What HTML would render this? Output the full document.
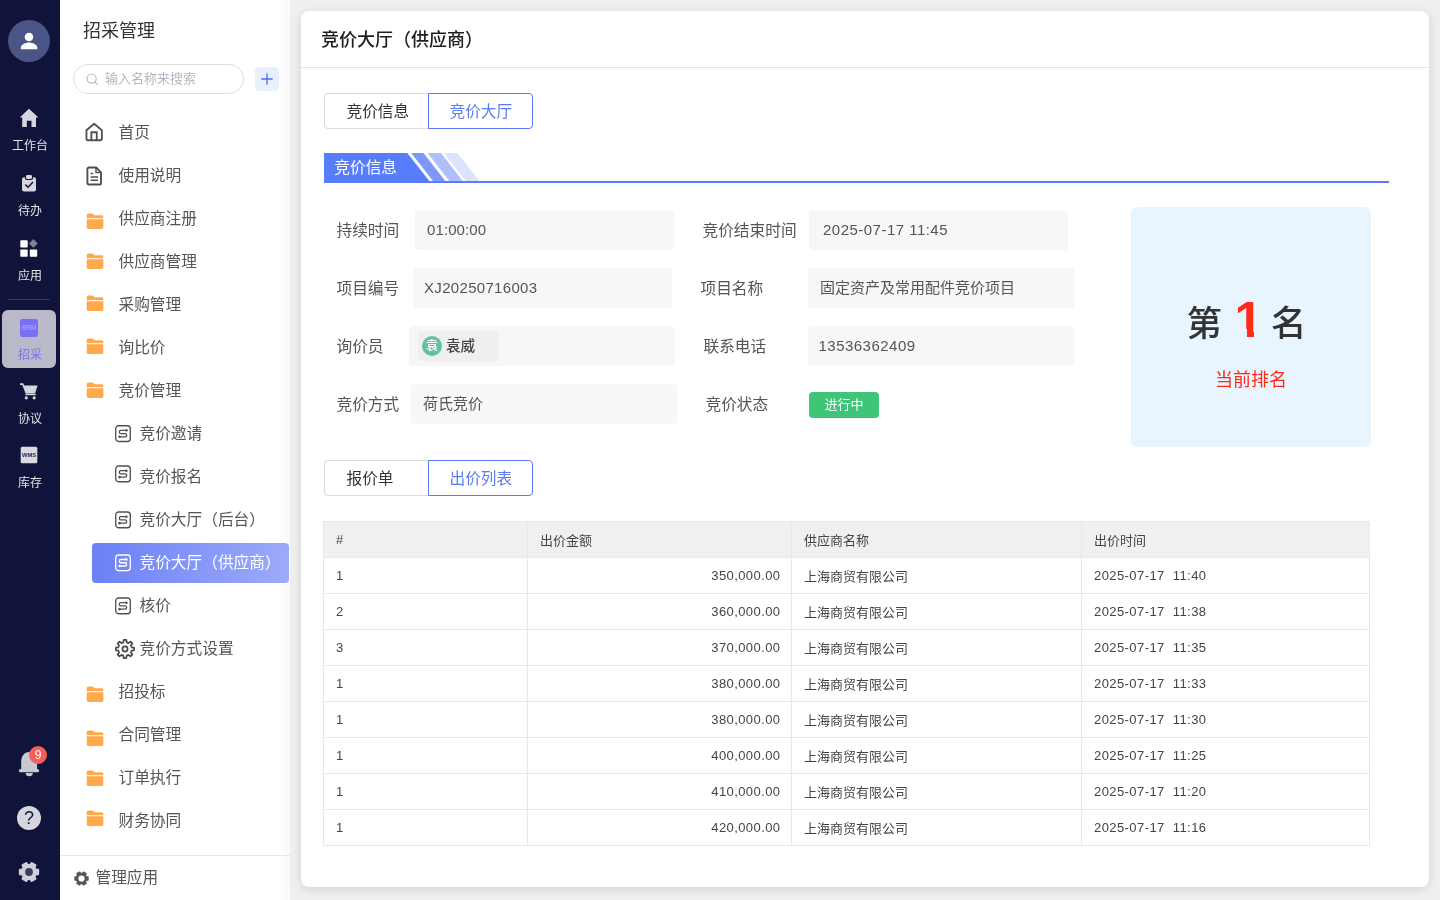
<!DOCTYPE html>
<html lang="zh-CN">
<head>
<meta charset="utf-8">
<title>竞价大厅（供应商）</title>
<style>
*{box-sizing:border-box;margin:0;padding:0}
html,body{width:1440px;height:900px;overflow:hidden}
body{will-change:transform;font-family:"Liberation Sans","Noto Sans CJK SC",sans-serif;background:#efefef;color:#333;position:relative}
.abs{position:absolute}
/* rail */
#rail{position:absolute;left:0;top:0;width:60px;height:900px;background:#11143a}
#rail .av{position:absolute;left:8px;top:20px;width:42px;height:42px;border-radius:50%;background:#4a5487}
#rail .it{position:absolute;left:0;width:60px;text-align:center;color:#dcdce2;font-size:12px;line-height:12px}
#rail .lbl{position:absolute;left:0;width:60px;text-align:center;color:#e3e3e8;font-size:12px;line-height:14px}
#rail svg{position:absolute}
#rail .div{position:absolute;left:8px;top:299px;width:42px;height:1px;background:#34385a}
#rail .act{position:absolute;left:2px;top:310px;width:54px;height:58px;border-radius:6px;background:#b9b9c9}
/* sidebar */
#side{position:absolute;left:60px;top:0;width:230px;height:900px;background:linear-gradient(90deg,#fff 0,#fff 216px,#fafafa 230px)}
#side h1{position:absolute;left:23px;top:18.500px;font-size:18px;line-height:24px;font-weight:400;color:#333}
#side .search{position:absolute;left:13px;top:64px;width:171px;height:30px;border:1px solid #dcdcdc;border-radius:15px}
#side .search span{position:absolute;left:31px;top:5.500px;font-size:13px;line-height:16px;color:#b4b8c0}
#side .plus{position:absolute;left:195px;top:67px;width:24px;height:24px;border-radius:4px;background:#e8f0fe}
#side .mi{position:absolute;left:58.500px;font-size:15.700px;line-height:22px;color:#555;white-space:nowrap}
#side .si{position:absolute;left:79.500px;font-size:15.700px;line-height:22px;color:#555;white-space:nowrap}
#side svg{position:absolute}
#side .active{position:absolute;left:32px;top:543px;width:197px;height:40px;border-radius:4px;background:linear-gradient(100deg,#6a80f5,#9dabf9)}
#side .foot{position:absolute;left:0;top:855px;width:230px;height:45px;border-top:1px solid #e8e8ec}
#side .foot span{position:absolute;left:35.500px;top:10.500px;font-size:15.700px;line-height:22px;color:#555}
/* main */
#card{position:absolute;left:301px;top:11px;width:1128px;height:876px;background:#fff;border-radius:8px;box-shadow:0 2px 10px rgba(0,0,0,.12)}
#card .title{position:absolute;left:20px;top:16px;font-size:18px;line-height:26px;font-weight:500;color:#1f1f1f}
#card .hr{position:absolute;left:0;top:56px;width:1128px;height:1px;background:#e4e4e4}
.tabs{position:absolute;height:36px}
.tabs div{position:absolute;top:0;height:36px;border:1px solid #d9d9d9;font-size:15.700px;line-height:36px;text-align:left;padding-left:21.500px;color:#333;background:#fff}
.tabs .l{left:0;border-radius:4px 0 0 4px}
.tabs .r{padding-left:20.500px;border-color:#5b7cf2;color:#5b7cf2;border-radius:0 4px 4px 0}
.lab{position:absolute;font-size:15.700px;line-height:22px;color:#555;white-space:nowrap}
.inp{position:absolute;height:40px;border-radius:4px;background:#f7f7f7;font-size:15px;line-height:40px;color:#555;white-space:nowrap}
table{position:absolute;left:323px;top:521px;border-collapse:collapse;font-size:13px;color:#444;table-layout:fixed}
td,th{border:1px solid #e8e8e8;height:36px;padding:0 11px 0 12px;text-align:left;font-weight:400;white-space:nowrap}
th{background:#f0f0f0}
td.n{text-align:right;letter-spacing:.42px;padding-right:10.500px}
td.d{letter-spacing:.42px}
.chip{position:absolute;left:9px;top:5px;width:81px;height:30px;border-radius:4px;background:#efefef}
.chip i{position:absolute;left:4px;top:5px;width:20px;height:20px;border-radius:50%;background:#62c0a5;color:#fff;font-style:normal;font-size:12.500px;font-weight:500;line-height:20px;text-align:center}
.chip b{position:absolute;left:28px;top:0;font-weight:500;font-size:14.600px;line-height:30px;color:#444}
.badge{position:absolute;left:809px;top:392px;width:70px;height:26px;border-radius:4px;background:#3fc577;color:#fff;font-size:13px;line-height:26px;text-align:center}
.rank{position:absolute;left:1131px;top:207px;width:240px;height:240px;border-radius:6px;background:#e8f4fe}
.rank .r1{position:absolute;left:0;top:0;width:240px;height:240px;color:#333}
.rank .r1 span{position:absolute;top:91.500px;font-size:35.500px;line-height:50px;font-weight:500}
.rank .r1 em{position:absolute;top:85px;left:103.500px;font-style:normal;color:#ff2a16;font-size:50.500px;line-height:56px;font-weight:700;font-family:"Liberation Sans",sans-serif}
.rank .r2{position:absolute;left:0;top:161px;width:240px;text-align:center;font-size:18px;line-height:24px;color:#ff2a16}
.rank .cv{position:absolute;top:122px;height:12px;background:#e8f4fe}
</style>
</head>
<body>
<div id="rail">
<div class="av"></div>
<svg style="left:8px;top:20px" width="42" height="42" viewBox="0 0 42 42"><circle cx="21" cy="17" r="4.3" fill="#fff"/><path d="M12.8 29.2v-1.4c0-3 4.6-5.2 8.2-5.2s8.3 2.200 8.300 5.200v1.400z" fill="#fff"/></svg>
<svg style="left:18px;top:107px" width="24" height="22" viewBox="18 107 24 22"><path d="M29 108.800L38.400 117.500H36V127H31.500V120.700H26.800V127H22.200V117.500H19.800Z" fill="#d6d6de"/></svg>
<div class="lbl" style="top:139px">工作台</div>
<svg style="left:20px;top:173px" width="20" height="20" viewBox="20 173 20 20"><rect x="22" y="177.200" width="14" height="14.400" rx="2" fill="#d6d6de"/><rect x="24.900" y="174" width="8.200" height="6" rx="2" fill="#11143a"/><rect x="26" y="174.900" width="6" height="4" rx="1.300" fill="#d6d6de"/><path d="M25.300 184.500l2.700 2.700 5-5.300" fill="none" stroke="#11143a" stroke-width="1.500"/></svg>
<div class="lbl" style="top:204px">待办</div>
<svg style="left:19px;top:238px" width="20" height="20" viewBox="19 238 20 20"><rect x="20.300" y="240.300" width="7.400" height="7.200" rx="0.800" fill="#fff"/><rect x="20.300" y="249.500" width="7.400" height="7.300" rx="0.800" fill="#fff"/><rect x="29.800" y="249.500" width="7.400" height="7.300" rx="0.800" fill="#fff"/><path d="M33.400 239l4.400 4.400-4.400 4.400-4.400-4.400z" fill="#7f819a"/></svg>
<div class="lbl" style="top:269px">应用</div>
<div class="div"></div>
<div class="act"></div>
<svg style="left:20px;top:319px" width="18" height="18" viewBox="0 0 18 18"><rect width="18" height="18" rx="2" fill="#7a6ff5"/><text x="9" y="11.400" font-size="6.500" fill="#bcb6fb" text-anchor="middle" font-family="Liberation Sans, sans-serif">SRM</text></svg>
<div class="lbl" style="top:348px;color:#7a6ff5">招采</div>
<svg style="left:19px;top:381px" width="20" height="20" viewBox="19 381 20 20"><path d="M20 383.200h3.200l1 2.300h13.400l-2.600 8h-9.400l-3.300-8.600H20z" fill="#d6d6de"/><path d="M25.400 394.500h10.400" stroke="#d6d6de" stroke-width="1.400"/><circle cx="26.300" cy="397.800" r="1.600" fill="#d6d6de"/><circle cx="34.200" cy="397.800" r="1.600" fill="#d6d6de"/></svg>
<div class="lbl" style="top:412px">协议</div>
<svg style="left:20px;top:446px" width="18" height="18" viewBox="0 0 18 18"><rect x="0.700" y="0.700" width="16.600" height="16.600" rx="1.500" fill="#d9d9e0"/><text x="9" y="11.200" font-size="5.800" font-weight="700" fill="#22254a" text-anchor="middle" font-family="Liberation Sans, sans-serif">WMS</text></svg>
<div class="lbl" style="top:476px">库存</div>
<svg style="left:17px;top:750px" width="24" height="28" viewBox="17 750 24 28"><rect x="18.900" y="769" width="20.200" height="3.200" rx="1.500" fill="#c9c9d3"/><path d="M21.200 770V761.500C21.200 756 24.500 751.900 29 751.900C33.500 751.900 37.100 756 37.100 761.500V770Z" fill="#c9c9d3"/><path d="M25.600 773h7.200a3.600 3.200 0 0 1-7.200 0Z" fill="#c9c9d3"/></svg>
<div style="position:absolute;left:29px;top:746px;width:18px;height:18px;border-radius:9px;background:#f75e58;color:#fff;font-size:12px;line-height:18px;text-align:center">9</div>
<svg style="left:17px;top:806px" width="24" height="24" viewBox="0 0 24 24"><circle cx="12" cy="12" r="12" fill="#d6d6de"/><text x="12" y="18.300" font-size="18" fill="#11143a" text-anchor="middle" font-family="Liberation Sans, sans-serif">?</text></svg>
<svg style="left:16.600px;top:859.900px" width="24" height="24" viewBox="0 0 24 24"><path d="M18.62 9.72L21.06 9.91L21.06 14.09L18.62 14.28L17.28 16.59L18.34 18.80L14.72 20.89L13.34 18.87L10.66 18.87L9.28 20.89L5.66 18.80L6.72 16.59L5.38 14.28L2.94 14.09L2.94 9.91L5.38 9.72L6.72 7.41L5.66 5.20L9.28 3.11L10.66 5.13L13.34 5.13L14.72 3.11L18.34 5.20L17.28 7.41Z" fill="#cfcfd8" stroke="#cfcfd8" stroke-width="2.200" stroke-linejoin="round"/><circle cx="12" cy="12" r="3.900" fill="#3a3e63"/></svg>
</div>
<div id="side">
<h1>招采管理</h1>
<div class="search"><svg style="left:12px;top:8px" width="13" height="13" viewBox="0 0 13 13"><circle cx="5.600" cy="5.600" r="4.600" fill="none" stroke="#b4b8c4" stroke-width="1.100"/><path d="M9 9l2.600 2.600" stroke="#b4b8c4" stroke-width="1.100"/></svg><span>输入名称来搜索</span></div>
<div class="plus"><svg style="left:6px;top:6px" width="12" height="12" viewBox="0 0 12 12"><path d="M6 0.300v11.400M0.300 6h11.400" stroke="#4d6ef2" stroke-width="1.300"/></svg></div>
<svg style="left:25px;top:122px" width="18.300" height="20" viewBox="0 0 19 20" preserveAspectRatio="none"><path d="M1.500 8.200L9.500 1.700l8 6.500v8.400a1.600 1.600 0 0 1-1.600 1.600H3.100a1.600 1.600 0 0 1-1.600-1.600z" fill="none" stroke="#505050" stroke-width="1.900" stroke-linejoin="round"/><path d="M6.600 18v-7.800h5.600v7.800" fill="none" stroke="#505050" stroke-width="1.900"/></svg>
<div class="mi" style="top:121.500px">首页</div>
<svg style="left:26px;top:166px" width="17" height="20" viewBox="0 0 17 20"><path d="M3 1.500h7.200l4.800 4.800v10.600a1.600 1.600 0 0 1-1.600 1.600H3a1.600 1.600 0 0 1-1.600-1.600V3.100A1.600 1.600 0 0 1 3 1.500z" fill="none" stroke="#505050" stroke-width="1.900" stroke-linejoin="round"/><path d="M10 1.800v4.800h4.800" fill="none" stroke="#505050" stroke-width="1.500"/><path d="M4.600 7.600h2.600M4.600 11h7.400M4.600 14.300h7.400" stroke="#505050" stroke-width="1.500"/></svg>
<div class="mi" style="top:164.500px">使用说明</div>
<svg style="left:25px;top:212px" width="21" height="20" viewBox="0 0 21 20"><g transform="translate(1.70 1.50) scale(1.0000 1.0000)"><path d="M0 4.800V1.500a1.500 1.500 0 0 1 1.500-1.500H5.600a1.500 1.500 0 0 1 1.100.500L7.900 1.700H15.200a1.400 1.400 0 0 1 1.400 1.400V4.800Z" fill="#ffa94d"/><path d="M0 5.800H16.600V13.800a1.600 1.600 0 0 1-1.600 1.600H1.600a1.600 1.600 0 0 1-1.600-1.600Z" fill="#ffa94d"/></g></svg>
<div class="mi" style="top:207.5px">供应商注册</div>
<svg style="left:25px;top:252px" width="21" height="20" viewBox="0 0 21 20"><g transform="translate(1.70 1.50) scale(1.0000 1.0000)"><path d="M0 4.800V1.500a1.500 1.500 0 0 1 1.500-1.500H5.600a1.500 1.500 0 0 1 1.100.500L7.900 1.700H15.200a1.400 1.400 0 0 1 1.400 1.400V4.800Z" fill="#ffa94d"/><path d="M0 5.800H16.600V13.800a1.600 1.600 0 0 1-1.600 1.600H1.600a1.600 1.600 0 0 1-1.600-1.600Z" fill="#ffa94d"/></g></svg>
<div class="mi" style="top:250.5px">供应商管理</div>
<svg style="left:25px;top:294px" width="21" height="20" viewBox="0 0 21 20"><g transform="translate(1.70 1.50) scale(1.0000 1.0000)"><path d="M0 4.800V1.500a1.500 1.500 0 0 1 1.500-1.500H5.600a1.500 1.500 0 0 1 1.100.500L7.900 1.700H15.200a1.400 1.400 0 0 1 1.400 1.400V4.800Z" fill="#ffa94d"/><path d="M0 5.800H16.600V13.800a1.600 1.600 0 0 1-1.600 1.600H1.600a1.600 1.600 0 0 1-1.600-1.600Z" fill="#ffa94d"/></g></svg>
<div class="mi" style="top:293.5px">采购管理</div>
<svg style="left:25px;top:337px" width="21" height="20" viewBox="0 0 21 20"><g transform="translate(1.70 1.50) scale(1.0000 1.0000)"><path d="M0 4.800V1.500a1.500 1.500 0 0 1 1.500-1.500H5.600a1.500 1.500 0 0 1 1.100.500L7.900 1.700H15.200a1.400 1.400 0 0 1 1.400 1.400V4.800Z" fill="#ffa94d"/><path d="M0 5.800H16.600V13.800a1.600 1.600 0 0 1-1.600 1.600H1.600a1.600 1.600 0 0 1-1.600-1.600Z" fill="#ffa94d"/></g></svg>
<div class="mi" style="top:336.5px">询比价</div>
<svg style="left:25px;top:381px" width="21" height="20" viewBox="0 0 21 20"><g transform="translate(1.70 1.50) scale(1.0000 1.0000)"><path d="M0 4.800V1.500a1.500 1.500 0 0 1 1.500-1.500H5.600a1.500 1.500 0 0 1 1.100.500L7.900 1.700H15.200a1.400 1.400 0 0 1 1.400 1.400V4.800Z" fill="#ffa94d"/><path d="M0 5.800H16.600V13.800a1.600 1.600 0 0 1-1.600 1.600H1.600a1.600 1.600 0 0 1-1.600-1.600Z" fill="#ffa94d"/></g></svg>
<div class="mi" style="top:379.5px">竞价管理</div>
<svg style="left:25px;top:685px" width="21" height="20" viewBox="0 0 21 20"><g transform="translate(1.70 1.50) scale(1.0000 1.0000)"><path d="M0 4.800V1.500a1.500 1.500 0 0 1 1.500-1.500H5.600a1.500 1.500 0 0 1 1.100.500L7.900 1.700H15.200a1.400 1.400 0 0 1 1.400 1.400V4.800Z" fill="#ffa94d"/><path d="M0 5.800H16.600V13.800a1.600 1.600 0 0 1-1.600 1.600H1.600a1.600 1.600 0 0 1-1.600-1.600Z" fill="#ffa94d"/></g></svg>
<div class="mi" style="top:680.5px">招投标</div>
<svg style="left:25px;top:729px" width="21" height="20" viewBox="0 0 21 20"><g transform="translate(1.70 1.50) scale(1.0000 1.0000)"><path d="M0 4.800V1.500a1.500 1.500 0 0 1 1.500-1.500H5.600a1.500 1.500 0 0 1 1.100.500L7.900 1.700H15.200a1.400 1.400 0 0 1 1.400 1.400V4.800Z" fill="#ffa94d"/><path d="M0 5.800H16.600V13.800a1.600 1.600 0 0 1-1.600 1.600H1.600a1.600 1.600 0 0 1-1.600-1.600Z" fill="#ffa94d"/></g></svg>
<div class="mi" style="top:723.5px">合同管理</div>
<svg style="left:25px;top:769px" width="21" height="20" viewBox="0 0 21 20"><g transform="translate(1.70 1.50) scale(1.0000 1.0000)"><path d="M0 4.800V1.500a1.500 1.500 0 0 1 1.500-1.500H5.600a1.500 1.500 0 0 1 1.100.500L7.900 1.700H15.200a1.400 1.400 0 0 1 1.400 1.400V4.800Z" fill="#ffa94d"/><path d="M0 5.800H16.600V13.800a1.600 1.600 0 0 1-1.600 1.600H1.600a1.600 1.600 0 0 1-1.600-1.600Z" fill="#ffa94d"/></g></svg>
<div class="mi" style="top:766.5px">订单执行</div>
<svg style="left:25px;top:809px" width="21" height="20" viewBox="0 0 21 20"><g transform="translate(1.70 1.50) scale(1.0000 1.0000)"><path d="M0 4.800V1.500a1.500 1.500 0 0 1 1.500-1.500H5.600a1.500 1.500 0 0 1 1.100.500L7.900 1.700H15.200a1.400 1.400 0 0 1 1.400 1.400V4.800Z" fill="#ffa94d"/><path d="M0 5.800H16.600V13.800a1.600 1.600 0 0 1-1.600 1.600H1.600a1.600 1.600 0 0 1-1.600-1.600Z" fill="#ffa94d"/></g></svg>
<div class="mi" style="top:809.5px">财务协同</div>
<div class="active"></div>
<svg style="left:54px;top:424px" width="20" height="22" viewBox="0 0 20 22"><g transform="translate(1.00 1.00) scale(0.9412 1.0118)"><rect x="0.750" y="0.750" width="15.500" height="15.500" rx="3" fill="none" stroke="#505050" stroke-width="1.400"/><path d="M12 5.300H6.200a1.600 1.600 0 0 0 0 3.200h4.600a1.600 1.600 0 0 1 0 3.200H5" fill="none" stroke="#505050" stroke-width="1.400"/><circle cx="12.200" cy="5.300" r="1.250" fill="#505050"/><circle cx="4.800" cy="11.700" r="1.250" fill="#505050"/></g></svg>
<div class="si" style="top:422.5px;color:#555">竞价邀请</div>
<svg style="left:54px;top:464px" width="20" height="22" viewBox="0 0 20 22"><g transform="translate(1.00 1.30) scale(0.9412 1.0118)"><rect x="0.750" y="0.750" width="15.500" height="15.500" rx="3" fill="none" stroke="#505050" stroke-width="1.400"/><path d="M12 5.300H6.200a1.600 1.600 0 0 0 0 3.200h4.600a1.600 1.600 0 0 1 0 3.200H5" fill="none" stroke="#505050" stroke-width="1.400"/><circle cx="12.200" cy="5.300" r="1.250" fill="#505050"/><circle cx="4.800" cy="11.700" r="1.250" fill="#505050"/></g></svg>
<div class="si" style="top:465.5px;color:#555">竞价报名</div>
<svg style="left:54px;top:510px" width="20" height="22" viewBox="0 0 20 22"><g transform="translate(1.00 1.30) scale(0.9412 1.0118)"><rect x="0.750" y="0.750" width="15.500" height="15.500" rx="3" fill="none" stroke="#505050" stroke-width="1.400"/><path d="M12 5.300H6.200a1.600 1.600 0 0 0 0 3.200h4.600a1.600 1.600 0 0 1 0 3.200H5" fill="none" stroke="#505050" stroke-width="1.400"/><circle cx="12.200" cy="5.300" r="1.250" fill="#505050"/><circle cx="4.800" cy="11.700" r="1.250" fill="#505050"/></g></svg>
<div class="si" style="top:508.5px;color:#555">竞价大厅（后台）</div>
<svg style="left:54px;top:553px" width="20" height="22" viewBox="0 0 20 22"><g transform="translate(1.00 1.20) scale(0.9412 1.0118)"><rect x="0.750" y="0.750" width="15.500" height="15.500" rx="3" fill="none" stroke="#fff" stroke-width="1.400"/><path d="M12 5.300H6.200a1.600 1.600 0 0 0 0 3.200h4.600a1.600 1.600 0 0 1 0 3.200H5" fill="none" stroke="#fff" stroke-width="1.400"/><circle cx="12.200" cy="5.300" r="1.250" fill="#fff"/><circle cx="4.800" cy="11.700" r="1.250" fill="#fff"/></g></svg>
<div class="si" style="top:551.5px;color:#fff">竞价大厅（供应商）</div>
<svg style="left:54px;top:596px" width="20" height="22" viewBox="0 0 20 22"><g transform="translate(1.00 1.30) scale(0.9412 1.0118)"><rect x="0.750" y="0.750" width="15.500" height="15.500" rx="3" fill="none" stroke="#505050" stroke-width="1.400"/><path d="M12 5.300H6.200a1.600 1.600 0 0 0 0 3.200h4.600a1.600 1.600 0 0 1 0 3.200H5" fill="none" stroke="#505050" stroke-width="1.400"/><circle cx="12.200" cy="5.300" r="1.250" fill="#505050"/><circle cx="4.800" cy="11.700" r="1.250" fill="#505050"/></g></svg>
<div class="si" style="top:594.5px;color:#555">核价</div>
<svg style="left:54px;top:638px" width="22" height="22" viewBox="0 0 24 24"><path d="M19.26 10.12L21.90 10.61L21.90 13.39L19.26 13.88L18.46 15.81L19.99 18.02L18.02 19.99L15.81 18.46L13.88 19.26L13.39 21.90L10.61 21.90L10.12 19.26L8.19 18.46L5.98 19.99L4.01 18.02L5.54 15.81L4.74 13.88L2.10 13.39L2.10 10.61L4.74 10.12L5.54 8.19L4.01 5.98L5.98 4.01L8.19 5.54L10.12 4.74L10.61 2.10L13.39 2.10L13.88 4.74L15.81 5.54L18.02 4.01L19.99 5.98L18.46 8.19Z" fill="none" stroke="#4a4a4a" stroke-width="1.900" stroke-linejoin="round"/><circle cx="12" cy="12" r="2.800" fill="none" stroke="#4a4a4a" stroke-width="1.900"/></svg>
<div class="si" style="top:637.500px">竞价方式设置</div>
<div class="foot"><svg style="left:13.200px;top:14.400px" width="17" height="17" viewBox="0 0 24 24"><path d="M18.62 9.72L21.06 9.91L21.06 14.09L18.62 14.28L17.28 16.59L18.34 18.80L14.72 20.89L13.34 18.87L10.66 18.87L9.28 20.89L5.66 18.80L6.72 16.59L5.38 14.28L2.94 14.09L2.94 9.91L5.38 9.72L6.72 7.41L5.66 5.20L9.28 3.11L10.66 5.13L13.34 5.13L14.72 3.11L18.34 5.20L17.28 7.41Z" fill="#555" stroke="#555" stroke-width="2.200" stroke-linejoin="round"/><circle cx="12" cy="12" r="4.400" fill="#fff"/></svg><span>管理应用</span></div>
</div>
<div id="card"><div class="title">竞价大厅（供应商）</div><div class="hr"></div></div>
<div class="tabs" style="left:324px;top:92.500px"><div class="l" style="width:105px">竞价信息</div><div class="r" style="left:104px;width:105px">竞价大厅</div></div>
<svg class="abs" style="left:324px;top:153px" width="1066" height="30" viewBox="0 0 1066 30">
<path d="M0 0H83.300L105.300 28V30H0Z" fill="#587dfa"/>
<path d="M87.200 0H99.500L121.300 28H109Z" fill="#7d98fb"/>
<path d="M103.500 0H117L138.800 28H125.300Z" fill="#aebffc"/>
<path d="M119.800 0H133.500L155.300 28H141.600Z" fill="#dbe3fe"/>
<rect x="0" y="28" width="1065" height="2" fill="#587dfa"/>
<text x="10.300" y="20.200" font-size="15.700" fill="#fff" font-family="Liberation Sans, Noto Sans CJK SC, sans-serif">竞价信息</text>
</svg>
<div class="lab" style="left:336.5px;top:220px">持续时间</div>
<div class="inp" style="left:415px;top:210px;width:259px;height:40px;line-height:39.5px;padding-left:12px;letter-spacing:0.1px">01:00:00</div>
<div class="lab" style="left:336.5px;top:278px">项目编号</div>
<div class="inp" style="left:413px;top:268px;width:259px;height:39.5px;line-height:39px;padding-left:11px;letter-spacing:0.32px">XJ20250716003</div>
<div class="lab" style="left:336.5px;top:336px">询价员</div>
<div class="inp" style="left:409px;top:326px;width:266px;height:39.5px;line-height:39px;padding-left:0px;letter-spacing:0px"><span class="chip"><i>袁</i><b>袁威</b></span></div>
<div class="lab" style="left:336.5px;top:394px">竞价方式</div>
<div class="inp" style="left:411px;top:384px;width:266px;height:39.5px;line-height:39px;padding-left:12px;letter-spacing:0px">荷氏竞价</div>
<div class="lab" style="left:702.5px;top:220px">竞价结束时间</div>
<div class="inp" style="left:809px;top:210px;width:259px;height:40px;line-height:39.5px;padding-left:14px;letter-spacing:0.48px">2025-07-17 11:45</div>
<div class="lab" style="left:700.5px;top:278px">项目名称</div>
<div class="inp" style="left:808px;top:268px;width:266px;height:39.5px;line-height:39px;padding-left:12px;letter-spacing:0px">固定资产及常用配件竞价项目</div>
<div class="lab" style="left:703.5px;top:336px">联系电话</div>
<div class="inp" style="left:808px;top:326px;width:266px;height:39.5px;line-height:39px;padding-left:10.5px;letter-spacing:0.48px">13536362409</div>
<div class="lab" style="left:705.5px;top:394px">竞价状态</div>
<div class="badge">进行中</div>
<div class="rank"><div class="r1"><span style="left:55.500px">第</span><em>1</em><span style="left:140px">名</span><div class="cv" style="left:100px;width:15.500px"></div><div class="cv" style="left:122.500px;width:14px"></div></div><div class="r2">当前排名</div></div>
<div class="tabs" style="left:324px;top:460px"><div class="l" style="width:105px">报价单</div><div class="r" style="left:104px;width:105px">出价列表</div></div>
<table><colgroup><col style="width:204px"><col style="width:264px"><col style="width:290px"><col style="width:288px"></colgroup>
<tr><th>#</th><th>出价金额</th><th>供应商名称</th><th>出价时间</th></tr>
<tr><td>1</td><td class="n">350,000.00</td><td>上海商贸有限公司</td><td class="d">2025-07-17&nbsp; 11:40</td></tr>
<tr><td>2</td><td class="n">360,000.00</td><td>上海商贸有限公司</td><td class="d">2025-07-17&nbsp; 11:38</td></tr>
<tr><td>3</td><td class="n">370,000.00</td><td>上海商贸有限公司</td><td class="d">2025-07-17&nbsp; 11:35</td></tr>
<tr><td>1</td><td class="n">380,000.00</td><td>上海商贸有限公司</td><td class="d">2025-07-17&nbsp; 11:33</td></tr>
<tr><td>1</td><td class="n">380,000.00</td><td>上海商贸有限公司</td><td class="d">2025-07-17&nbsp; 11:30</td></tr>
<tr><td>1</td><td class="n">400,000.00</td><td>上海商贸有限公司</td><td class="d">2025-07-17&nbsp; 11:25</td></tr>
<tr><td>1</td><td class="n">410,000.00</td><td>上海商贸有限公司</td><td class="d">2025-07-17&nbsp; 11:20</td></tr>
<tr><td>1</td><td class="n">420,000.00</td><td>上海商贸有限公司</td><td class="d">2025-07-17&nbsp; 11:16</td></tr>
</table>

</body>
</html>
